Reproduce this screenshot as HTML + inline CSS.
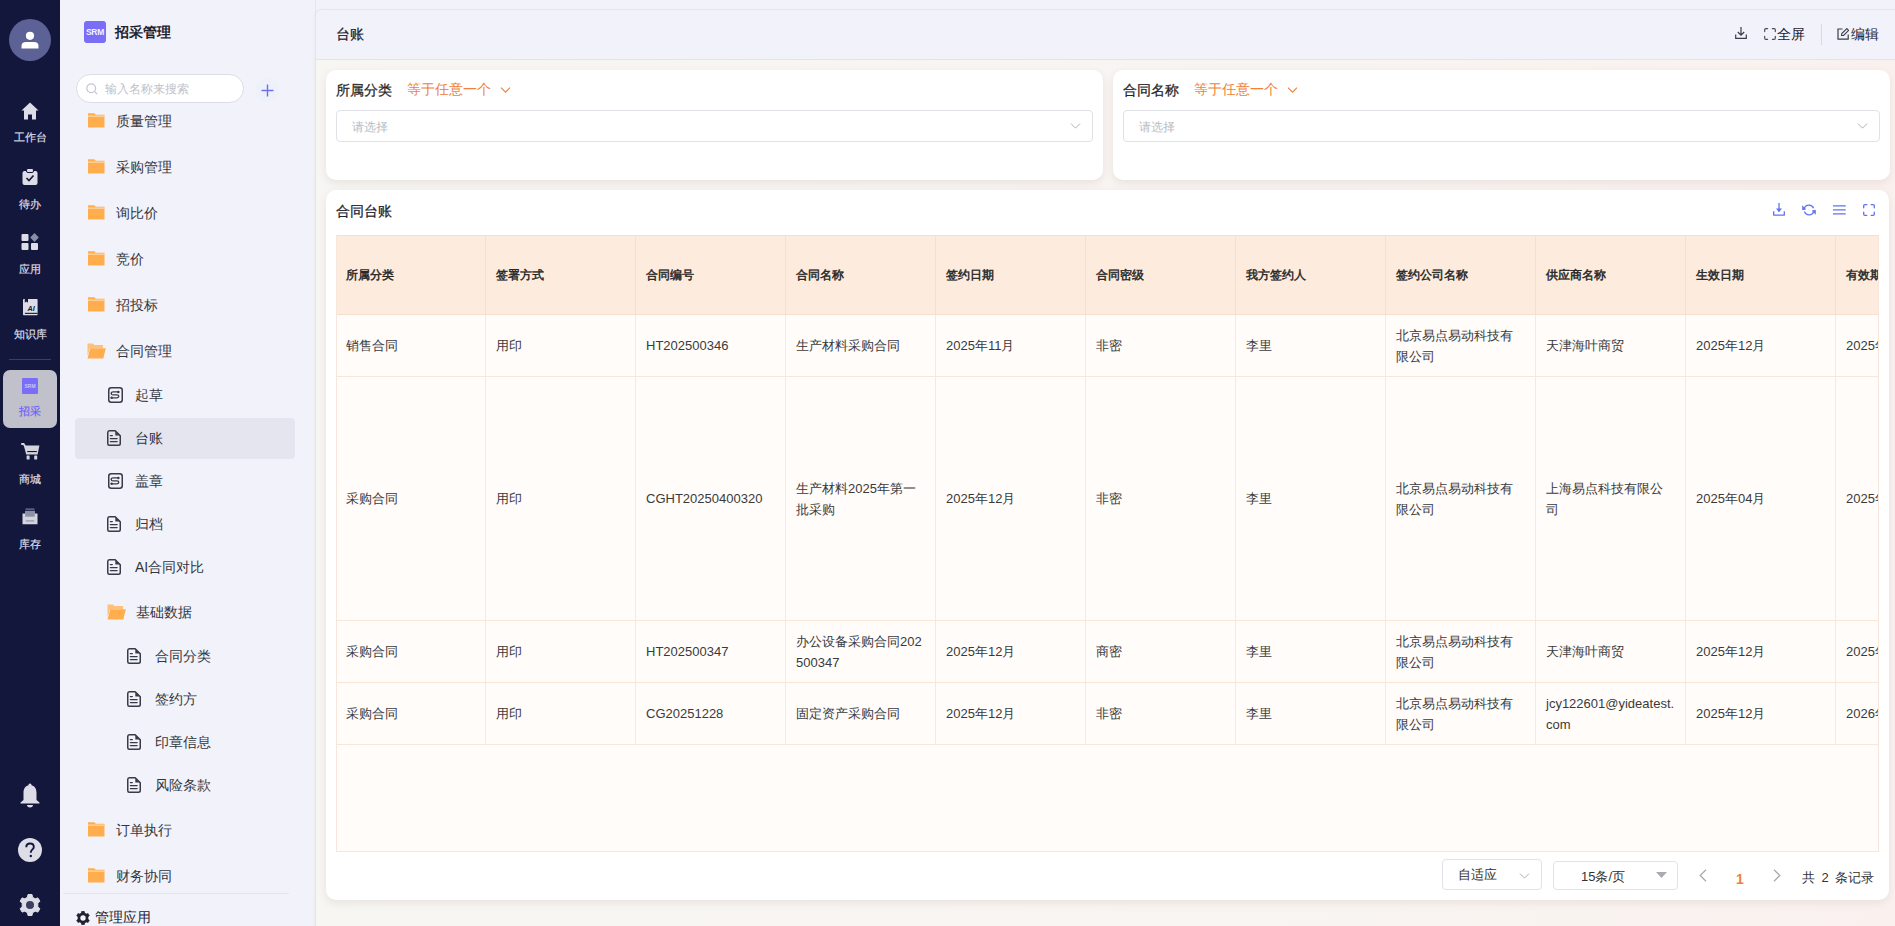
<!DOCTYPE html>
<html><head><meta charset="utf-8">
<style>
*{box-sizing:border-box;margin:0;padding:0}
html,body{width:1895px;height:926px;overflow:hidden}
body{font-family:"Liberation Sans",sans-serif;background:#f2f3fa;position:relative;color:#262626}
.abs{position:absolute}
#nav{left:0;top:0;width:60px;height:926px;background:#13173c}
.nv{position:absolute;left:0;width:60px;text-align:center;color:#dcdde6;font-size:11px;line-height:14px;-webkit-text-stroke:0.2px currentColor}
#side{left:60px;top:0;width:256px;height:926px;background:#f2f3fa;border-right:1px solid #e6e6ee}
.it{position:absolute;font-size:14px;line-height:20px;color:#333640;white-space:nowrap}
.fold{position:absolute}
.doc{position:absolute}
#main{left:316px;top:10px;width:1600px;height:940px;background:linear-gradient(to right,#f7f6f3,#f9f4f1 70%,#faf1ef 100%);border-radius:6px 0 0 0;box-shadow:0 0 0 1px #e4e4ec,-2px 0 3px rgba(0,0,0,.03)}
#hdr{left:0;top:0;width:100%;height:50px;background:#f2f3fa;border-bottom:1px solid #e3e3ea;border-radius:6px 0 0 0}
.card{position:absolute;background:#fff;border-radius:10px;box-shadow:0 3px 8px rgba(120,95,85,.12)}
.lbl{position:absolute;font-size:14px;color:#262626;line-height:20px;white-space:nowrap}
.op{position:absolute;font-size:14px;color:#f0813a;line-height:20px;white-space:nowrap}
.inp{position:absolute;height:32px;border:1px solid #e1e2e8;border-radius:4px;background:#fff}
.ph{position:absolute;font-size:12px;color:#b8bcc4;line-height:16px;white-space:nowrap}
table{border-collapse:collapse;table-layout:fixed;position:absolute}
td,th{border:1px solid #f6e6d8;padding:0 8px 0 10px;vertical-align:middle;text-align:left;white-space:nowrap;overflow:hidden}
th{border-color:#f3e0cf;background:#fdecdd;font-size:12px;font-weight:normal;-webkit-text-stroke:0.45px #262626;color:#262626;height:79px}
td{border-color:#f8e6d9 #f3ebe0;background:#fffcfa;font-size:13px;color:#3a3a3a;line-height:21px}
tr>:first-child{padding-left:9px}
</style></head>
<body>
<div id="nav" class="abs">
  <div class="abs" style="left:9px;top:19px;width:42px;height:42px;border-radius:50%;background:#5c6296"></div>
  <svg class="abs" style="left:21px;top:31px" width="18" height="18" viewBox="0 0 18 18"><circle cx="9" cy="4.8" r="4.1" fill="#fff"/><path d="M0.5 17.5 V15 Q0.5 11 5 11 H13 Q17.5 11 17.5 15 V17.5 Z" fill="#fff"/></svg>
  <svg class="abs" style="left:21px;top:102px" width="18" height="18" viewBox="0 0 18 18"><path d="M9 0.5 L17.5 8.5 L15 8.5 L15 17.5 L11 17.5 L11 12.5 L7 12.5 L7 17.5 L3 17.5 L3 8.5 L0.5 8.5 Z" fill="#dcdde6"/></svg>
  <div class="nv" style="top:130px">工作台</div>
  <svg class="abs" style="left:22px;top:168px" width="16" height="17" viewBox="0 0 16 17"><rect x="0.5" y="3" width="15" height="14" rx="2" fill="#dcdde6"/><rect x="4.5" y="0.5" width="7" height="4" rx="1.5" fill="#dcdde6" stroke="#13173c" stroke-width="1"/><path d="M4.5 10 L7 12.5 L11.5 7.5" stroke="#13173c" stroke-width="1.6" fill="none"/></svg>
  <div class="nv" style="top:197px">待办</div>
  <svg class="abs" style="left:21px;top:233px" width="18" height="18" viewBox="0 0 18 18"><rect x="0.5" y="1" width="7" height="7" rx="1" fill="#dcdde6"/><rect x="0.5" y="10" width="7" height="7" rx="1" fill="#dcdde6"/><rect x="10" y="10" width="7" height="7" rx="1" fill="#dcdde6"/><path d="M13.5 0 L17.8 4.5 L13.5 9 L9.2 4.5 Z" fill="#8a8da8"/></svg>
  <div class="nv" style="top:262px">应用</div>
  <svg class="abs" style="left:23px;top:299px" width="15" height="17" viewBox="0 0 15 17"><rect x="0" y="0" width="14.6" height="16.3" rx="0.8" fill="#dcdde6"/><path d="M1.8 0 H5 V3.8 L3.4 2.5 L1.8 3.8 Z" fill="#13173c"/><text x="8.2" y="11.8" font-size="7.2" font-weight="bold" font-style="italic" text-anchor="middle" fill="#13173c" font-family="Liberation Sans">AI</text><rect x="1.9" y="13.8" width="12.7" height="1.1" fill="#13173c"/></svg>
  <div class="nv" style="top:327px">知识库</div>
  <div class="abs" style="left:9px;top:359px;width:42px;height:1px;background:#3b3f60"></div>
  <div class="abs" style="left:3px;top:370px;width:54px;height:58px;border-radius:7px;background:#c0c1ca"></div>
  <div class="abs" style="left:22px;top:378px;width:16px;height:16px;background:#7b6ef6;border-radius:1px;color:#c9c4fb;font-size:5px;line-height:16px;text-align:center;font-weight:bold">SRM</div>
  <div class="nv" style="top:404px;color:#6d61f4">招采</div>
  <svg class="abs" style="left:21px;top:443px" width="19" height="17" viewBox="0 0 19 17"><path d="M0.2 1 H2.6 L4.2 3.5" fill="none" stroke="#d4d5de" stroke-width="1.8"/><path d="M2.8 2.4 H18.4 L16.6 11.6 H5.2 Z" fill="#d4d5de"/><rect x="6.2" y="8" width="9.6" height="1.1" fill="#13173c"/><rect x="5.6" y="12.4" width="3" height="4.2" rx="0.6" fill="#d4d5de"/><rect x="13.2" y="12.4" width="3" height="4.2" rx="0.6" fill="#d4d5de"/></svg>
  <div class="nv" style="top:472px">商城</div>
  <svg class="abs" style="left:22px;top:508px" width="16" height="17" viewBox="0 0 16 17"><rect x="3.5" y="0.6" width="9" height="1" fill="#8e90a8"/><path d="M3 2.8 H13 V8 H3 Z" fill="#8e90a8"/><path d="M0.5 5.5 H3.2 V8.2 H12.8 V5.5 H15.5 V16.3 H0.5 Z" fill="#d4d5de"/><rect x="3.8" y="12.4" width="8.4" height="1.1" fill="#8e90a8"/></svg>
  <div class="nv" style="top:537px">库存</div>
  <svg class="abs" style="left:20px;top:783px" width="20" height="25" viewBox="0 0 20 25"><path d="M10 0.5 C11.2 0.5 11.5 1.5 11.5 2.2 C15 3 16.5 6 16.5 10 V17 L19.5 19.5 V20.5 H0.5 V19.5 L3.5 17 V10 C3.5 6 5 3 8.5 2.2 C8.5 1.5 8.8 0.5 10 0.5 Z" fill="#dcdde6"/><path d="M7 22 H13 C13 23.5 11.8 24.5 10 24.5 C8.2 24.5 7 23.5 7 22 Z" fill="#dcdde6"/></svg>
  <svg class="abs" style="left:18px;top:838px" width="24" height="24" viewBox="0 0 24 24"><circle cx="12" cy="12" r="12" fill="#dcdde6"/><path d="M8.3 9.2 C8.3 6.8 10 5.5 12 5.5 C14.2 5.5 15.8 6.9 15.8 8.9 C15.8 11.5 12.8 11.8 12.8 14.2 V14.8" fill="none" stroke="#13173c" stroke-width="1.9"/><circle cx="12.8" cy="18" r="1.2" fill="#13173c"/></svg>
  <svg class="abs" style="left:19px;top:894px" width="22" height="22" viewBox="0 0 22 22"><path d="M9 0.5 H13 L13.6 3.3 L16.2 4.8 L18.9 3.9 L20.9 7.3 L18.8 9.2 V12.8 L20.9 14.7 L18.9 18.1 L16.2 17.2 L13.6 18.7 L13 21.5 H9 L8.4 18.7 L5.8 17.2 L3.1 18.1 L1.1 14.7 L3.2 12.8 V9.2 L1.1 7.3 L3.1 3.9 L5.8 4.8 L8.4 3.3 Z" fill="#dcdde6" stroke="#dcdde6" stroke-width="1" stroke-linejoin="round"/><circle cx="11" cy="11" r="4" fill="#3b3f60"/></svg>
</div>
<div id="side" class="abs">
  <div class="abs" style="left:24px;top:21px;width:22px;height:22px;background:#7b6ef6;border-radius:3px;color:#f4f2ff;font-size:8.5px;font-weight:bold;line-height:22px;text-align:center;letter-spacing:-0.3px">SRM</div>
  <div class="it" style="left:55px;top:22px;font-weight:bold;color:#1f2230">招采管理</div>
  <div class="abs" style="left:16px;top:74px;width:168px;height:29px;border:1px solid #dcdde6;border-radius:15px;background:#fff"></div>
  <svg class="abs" style="left:26px;top:83px" width="12" height="12" viewBox="0 0 12 12"><circle cx="5.2" cy="5.2" r="4.4" fill="none" stroke="#c4c6ce" stroke-width="1.2"/><path d="M8.4 8.4 L11.2 11.2" stroke="#c4c6ce" stroke-width="1.2"/></svg>
  <div class="abs" style="left:45px;top:81px;font-size:12px;line-height:16px;color:#c0c2ca;white-space:nowrap">输入名称来搜索</div>
  <div class="abs" style="left:195px;top:78px;width:24px;height:24px;border-radius:50%;background:#eef0fa"></div>
  <svg class="abs" style="left:201px;top:84px" width="13" height="13" viewBox="0 0 13 13"><path d="M6.5 0.5 V12.5 M0.5 6.5 H12.5" stroke="#6b6ff0" stroke-width="1.4"/></svg>
<svg class="fold" style="left:28px;top:113px" width="17" height="15" viewBox="0 0 17 15"><path d="M0 0.2 H6.3 L7.8 1.8 H16.5 V14.6 H0 Z" fill="#ffad4d"/><rect x="0" y="2.6" width="16.5" height="1" fill="#ffe2c2"/></svg><div class="it" style="left:56px;top:111px">质量管理</div>
<svg class="fold" style="left:28px;top:159px" width="17" height="15" viewBox="0 0 17 15"><path d="M0 0.2 H6.3 L7.8 1.8 H16.5 V14.6 H0 Z" fill="#ffad4d"/><rect x="0" y="2.6" width="16.5" height="1" fill="#ffe2c2"/></svg><div class="it" style="left:56px;top:157px">采购管理</div>
<svg class="fold" style="left:28px;top:205px" width="17" height="15" viewBox="0 0 17 15"><path d="M0 0.2 H6.3 L7.8 1.8 H16.5 V14.6 H0 Z" fill="#ffad4d"/><rect x="0" y="2.6" width="16.5" height="1" fill="#ffe2c2"/></svg><div class="it" style="left:56px;top:203px">询比价</div>
<svg class="fold" style="left:28px;top:251px" width="17" height="15" viewBox="0 0 17 15"><path d="M0 0.2 H6.3 L7.8 1.8 H16.5 V14.6 H0 Z" fill="#ffad4d"/><rect x="0" y="2.6" width="16.5" height="1" fill="#ffe2c2"/></svg><div class="it" style="left:56px;top:249px">竞价</div>
<svg class="fold" style="left:28px;top:297px" width="17" height="15" viewBox="0 0 17 15"><path d="M0 0.2 H6.3 L7.8 1.8 H16.5 V14.6 H0 Z" fill="#ffad4d"/><rect x="0" y="2.6" width="16.5" height="1" fill="#ffe2c2"/></svg><div class="it" style="left:56px;top:295px">招投标</div>
<svg class="fold" style="left:27px;top:343px" width="19" height="16" viewBox="0 0 19 16"><path d="M0.5 0.5 H6 L7.5 2 H16 V5 H3 L0.5 13 Z" fill="#ffc07a"/><path d="M3.2 5.2 H18.8 L16.3 15.5 H0.5 Z" fill="#ffad4d"/></svg><div class="it" style="left:56px;top:341px">合同管理</div>
<div class="abs" style="left:15px;top:418px;width:220px;height:41px;border-radius:4px;background:#e4e5ee"></div>
<svg class="doc" style="left:48px;top:387px" width="15" height="16" viewBox="0 0 15 16"><rect x="0.75" y="0.75" width="13.5" height="14.5" rx="2.5" fill="none" stroke="#373a47" stroke-width="1.5"/><path d="M10.4 4.9 H5.1 Q3.2 4.9 3.2 6.4 Q3.2 7.9 5.1 7.9 H9 Q10.8 7.9 10.8 9.35 Q10.8 10.8 9 10.8 H3.6" fill="none" stroke="#373a47" stroke-width="1.3"/><circle cx="10.4" cy="4.9" r="1.25" fill="#373a47"/><circle cx="3.6" cy="10.8" r="1.25" fill="#373a47"/></svg><div class="it" style="left:75px;top:385px">起草</div>
<svg class="doc" style="left:47px;top:430px" width="14" height="16" viewBox="0 0 14 16"><path d="M2.3 0.75 H8.2 L13.25 5.8 V13.5 Q13.25 15.25 11.5 15.25 H2.3 Q0.75 15.25 0.75 13.5 V2.5 Q0.75 0.75 2.3 0.75 Z" fill="none" stroke="#373a47" stroke-width="1.5" stroke-linejoin="round"/><path d="M8.3 1 L8.3 5.5 L13 5.5 Z" fill="#373a47"/><path d="M3.4 5.6 H5.3 M3.4 8.6 H10.1 M3.4 11.6 H10.1" stroke="#373a47" stroke-width="1.4" stroke-linecap="round"/></svg><div class="it" style="left:75px;top:428px">台账</div>
<svg class="doc" style="left:48px;top:473px" width="15" height="16" viewBox="0 0 15 16"><rect x="0.75" y="0.75" width="13.5" height="14.5" rx="2.5" fill="none" stroke="#373a47" stroke-width="1.5"/><path d="M10.4 4.9 H5.1 Q3.2 4.9 3.2 6.4 Q3.2 7.9 5.1 7.9 H9 Q10.8 7.9 10.8 9.35 Q10.8 10.8 9 10.8 H3.6" fill="none" stroke="#373a47" stroke-width="1.3"/><circle cx="10.4" cy="4.9" r="1.25" fill="#373a47"/><circle cx="3.6" cy="10.8" r="1.25" fill="#373a47"/></svg><div class="it" style="left:75px;top:471px">盖章</div>
<svg class="doc" style="left:47px;top:516px" width="14" height="16" viewBox="0 0 14 16"><path d="M2.3 0.75 H8.2 L13.25 5.8 V13.5 Q13.25 15.25 11.5 15.25 H2.3 Q0.75 15.25 0.75 13.5 V2.5 Q0.75 0.75 2.3 0.75 Z" fill="none" stroke="#373a47" stroke-width="1.5" stroke-linejoin="round"/><path d="M8.3 1 L8.3 5.5 L13 5.5 Z" fill="#373a47"/><path d="M3.4 5.6 H5.3 M3.4 8.6 H10.1 M3.4 11.6 H10.1" stroke="#373a47" stroke-width="1.4" stroke-linecap="round"/></svg><div class="it" style="left:75px;top:514px">归档</div>
<svg class="doc" style="left:47px;top:559px" width="14" height="16" viewBox="0 0 14 16"><path d="M2.3 0.75 H8.2 L13.25 5.8 V13.5 Q13.25 15.25 11.5 15.25 H2.3 Q0.75 15.25 0.75 13.5 V2.5 Q0.75 0.75 2.3 0.75 Z" fill="none" stroke="#373a47" stroke-width="1.5" stroke-linejoin="round"/><path d="M8.3 1 L8.3 5.5 L13 5.5 Z" fill="#373a47"/><path d="M3.4 5.6 H5.3 M3.4 8.6 H10.1 M3.4 11.6 H10.1" stroke="#373a47" stroke-width="1.4" stroke-linecap="round"/></svg><div class="it" style="left:75px;top:557px">AI合同对比</div>
<svg class="fold" style="left:47px;top:604px" width="19" height="16" viewBox="0 0 19 16"><path d="M0.5 0.5 H6 L7.5 2 H16 V5 H3 L0.5 13 Z" fill="#ffc07a"/><path d="M3.2 5.2 H18.8 L16.3 15.5 H0.5 Z" fill="#ffad4d"/></svg><div class="it" style="left:76px;top:602px">基础数据</div>
<svg class="doc" style="left:67px;top:648px" width="14" height="16" viewBox="0 0 14 16"><path d="M2.3 0.75 H8.2 L13.25 5.8 V13.5 Q13.25 15.25 11.5 15.25 H2.3 Q0.75 15.25 0.75 13.5 V2.5 Q0.75 0.75 2.3 0.75 Z" fill="none" stroke="#373a47" stroke-width="1.5" stroke-linejoin="round"/><path d="M8.3 1 L8.3 5.5 L13 5.5 Z" fill="#373a47"/><path d="M3.4 5.6 H5.3 M3.4 8.6 H10.1 M3.4 11.6 H10.1" stroke="#373a47" stroke-width="1.4" stroke-linecap="round"/></svg><div class="it" style="left:95px;top:646px">合同分类</div>
<svg class="doc" style="left:67px;top:691px" width="14" height="16" viewBox="0 0 14 16"><path d="M2.3 0.75 H8.2 L13.25 5.8 V13.5 Q13.25 15.25 11.5 15.25 H2.3 Q0.75 15.25 0.75 13.5 V2.5 Q0.75 0.75 2.3 0.75 Z" fill="none" stroke="#373a47" stroke-width="1.5" stroke-linejoin="round"/><path d="M8.3 1 L8.3 5.5 L13 5.5 Z" fill="#373a47"/><path d="M3.4 5.6 H5.3 M3.4 8.6 H10.1 M3.4 11.6 H10.1" stroke="#373a47" stroke-width="1.4" stroke-linecap="round"/></svg><div class="it" style="left:95px;top:689px">签约方</div>
<svg class="doc" style="left:67px;top:734px" width="14" height="16" viewBox="0 0 14 16"><path d="M2.3 0.75 H8.2 L13.25 5.8 V13.5 Q13.25 15.25 11.5 15.25 H2.3 Q0.75 15.25 0.75 13.5 V2.5 Q0.75 0.75 2.3 0.75 Z" fill="none" stroke="#373a47" stroke-width="1.5" stroke-linejoin="round"/><path d="M8.3 1 L8.3 5.5 L13 5.5 Z" fill="#373a47"/><path d="M3.4 5.6 H5.3 M3.4 8.6 H10.1 M3.4 11.6 H10.1" stroke="#373a47" stroke-width="1.4" stroke-linecap="round"/></svg><div class="it" style="left:95px;top:732px">印章信息</div>
<svg class="doc" style="left:67px;top:777px" width="14" height="16" viewBox="0 0 14 16"><path d="M2.3 0.75 H8.2 L13.25 5.8 V13.5 Q13.25 15.25 11.5 15.25 H2.3 Q0.75 15.25 0.75 13.5 V2.5 Q0.75 0.75 2.3 0.75 Z" fill="none" stroke="#373a47" stroke-width="1.5" stroke-linejoin="round"/><path d="M8.3 1 L8.3 5.5 L13 5.5 Z" fill="#373a47"/><path d="M3.4 5.6 H5.3 M3.4 8.6 H10.1 M3.4 11.6 H10.1" stroke="#373a47" stroke-width="1.4" stroke-linecap="round"/></svg><div class="it" style="left:95px;top:775px">风险条款</div>
<svg class="fold" style="left:28px;top:822px" width="17" height="15" viewBox="0 0 17 15"><path d="M0 0.2 H6.3 L7.8 1.8 H16.5 V14.6 H0 Z" fill="#ffad4d"/><rect x="0" y="2.6" width="16.5" height="1" fill="#ffe2c2"/></svg><div class="it" style="left:56px;top:820px">订单执行</div>
<svg class="fold" style="left:28px;top:868px" width="17" height="15" viewBox="0 0 17 15"><path d="M0 0.2 H6.3 L7.8 1.8 H16.5 V14.6 H0 Z" fill="#ffad4d"/><rect x="0" y="2.6" width="16.5" height="1" fill="#ffe2c2"/></svg><div class="it" style="left:56px;top:866px">财务协同</div>
<div class="abs" style="left:3px;top:893px;width:226px;height:1px;background:#e3e4ec"></div>
<svg class="abs" style="left:16px;top:911px" width="14" height="14" viewBox="0 0 22 22"><path d="M9 0.5 H13 L13.6 3.3 L16.2 4.8 L18.9 3.9 L20.9 7.3 L18.8 9.2 V12.8 L20.9 14.7 L18.9 18.1 L16.2 17.2 L13.6 18.7 L13 21.5 H9 L8.4 18.7 L5.8 17.2 L3.1 18.1 L1.1 14.7 L3.2 12.8 V9.2 L1.1 7.3 L3.1 3.9 L5.8 4.8 L8.4 3.3 Z" fill="#1f2230" stroke="#1f2230" stroke-linejoin="round"/><circle cx="11" cy="11" r="4.2" fill="#f1f2f9"/></svg>
<div class="it" style="left:35px;top:907px;color:#1f2230">管理应用</div>
</div>
<div id="main" class="abs">

  <div id="hdr" class="abs"></div>
  <div class="abs" style="left:20px;top:14px;font-size:14px;line-height:20px;-webkit-text-stroke:0.25px #1f2230;color:#1f2230">台账</div>
  <svg class="abs" style="left:1419px;top:17px" width="12" height="12" viewBox="0 0 12 12"><path d="M6 0 V8 M2.8 5 L6 8.2 L9.2 5 M0.7 7.5 V11.3 H11.3 V7.5" fill="none" stroke="#3a3d4a" stroke-width="1.2"/></svg>
  <svg class="abs" style="left:1448px;top:18px" width="12" height="12" viewBox="0 0 12 12"><path d="M3.6 0.7 H1.8 Q0.7 0.7 0.7 1.8 V3.6 M8.4 0.7 H10.2 Q11.3 0.7 11.3 1.8 V3.6 M0.7 8.4 V10.2 Q0.7 11.3 1.8 11.3 H3.6 M11.3 8.4 V10.2 Q11.3 11.3 10.2 11.3 H8.4" fill="none" stroke="#4a4d5a" stroke-width="1.2" stroke-linecap="round"/></svg>
  <div class="abs" style="left:1461px;top:14px;font-size:14px;line-height:20px;color:#1f2230">全屏</div>
  <div class="abs" style="left:1505px;top:14px;width:1px;height:21px;background:#d8d9e2"></div>
  <svg class="abs" style="left:1521px;top:18px" width="12" height="12" viewBox="0 0 12 12"><path d="M5.5 1 H1 V11.2 H11.2 V6.5" fill="none" stroke="#3a3d4a" stroke-width="1.2"/><path d="M4.5 7.5 L4.8 5.6 L9.8 0.6 L11.6 2.4 L6.6 7.4 Z" fill="none" stroke="#3a3d4a" stroke-width="1.1"/></svg>
  <div class="abs" style="left:1535px;top:14px;font-size:14px;line-height:20px;color:#1f2230">编辑</div>
<div class="card" style="left:10px;top:60px;width:777px;height:110px"></div>
<div class="lbl" style="left:20px;top:70px;-webkit-text-stroke:0.25px #262626">所属分类</div>
<div class="op" style="left:91px;top:69px">等于任意一个</div>
<svg class="abs" style="left:184px;top:77px" width="11" height="6" viewBox="0 0 12 7"><path d="M0.7 0.7 L6 6 L11.3 0.7" fill="none" stroke="#f0813a" stroke-width="1.3"/></svg><div class="inp" style="left:20px;top:100px;width:757px"></div>
<div class="ph" style="left:36px;top:109px">请选择</div>
<svg class="abs" style="left:754px;top:113px" width="11" height="6" viewBox="0 0 12 7"><path d="M0.7 0.7 L6 6 L11.3 0.7" fill="none" stroke="#a8abb2" stroke-width="1.1"/></svg><div class="card" style="left:797px;top:60px;width:777px;height:110px"></div>
<div class="lbl" style="left:807px;top:70px;-webkit-text-stroke:0.25px #262626">合同名称</div>
<div class="op" style="left:878px;top:69px">等于任意一个</div>
<svg class="abs" style="left:971px;top:77px" width="11" height="6" viewBox="0 0 12 7"><path d="M0.7 0.7 L6 6 L11.3 0.7" fill="none" stroke="#f0813a" stroke-width="1.3"/></svg><div class="inp" style="left:807px;top:100px;width:757px"></div>
<div class="ph" style="left:823px;top:109px">请选择</div>
<svg class="abs" style="left:1541px;top:113px" width="11" height="6" viewBox="0 0 12 7"><path d="M0.7 0.7 L6 6 L11.3 0.7" fill="none" stroke="#a8abb2" stroke-width="1.1"/></svg><div class="card" style="left:10px;top:180px;width:1563px;height:710px"></div>
<div class="abs" style="left:20px;top:191px;font-size:14px;line-height:20px;-webkit-text-stroke:0.25px #1f2230;color:#1f2230">合同台账</div>
<svg class="abs" style="left:1457px;top:193px" width="12" height="13" viewBox="0 0 12 13"><path d="M6 0 V8.5" stroke="#6272f2" stroke-width="1.3"/><path d="M3 5.6 L6 9.2 L9 5.6 Z" fill="#6272f2"/><path d="M0.7 8.3 V12.2 H11.3 V8.3" fill="none" stroke="#6272f2" stroke-width="1.3" stroke-linejoin="round"/></svg>
<svg class="abs" style="left:1486px;top:194px" width="14" height="12" viewBox="0 0 14 12"><path d="M2.2 4.5 A5 5 0 0 1 11.6 4.2 M11.8 7.5 A5 5 0 0 1 2.4 7.6" fill="none" stroke="#6272f2" stroke-width="1.3"/><path d="M0.3 1.8 L3.8 5.2 L0.6 5.9 Z M13.7 10.2 L10.2 6.8 L13.4 6.1 Z" fill="#6272f2" stroke="#6272f2" stroke-width="0.6" stroke-linejoin="round"/></svg>
<svg class="abs" style="left:1517px;top:195px" width="13" height="10" viewBox="0 0 13 10"><path d="M0.3 0.8 H12.3 M0.3 4.8 H12.3 M0.3 8.8 H12.3" stroke="#6272f2" stroke-width="1.3" stroke-linecap="round"/></svg>
<svg class="abs" style="left:1547px;top:194px" width="12" height="12" viewBox="0 0 12 12"><path d="M3.8 0.7 H1.8 Q0.7 0.7 0.7 1.8 V3.8 M8.2 0.7 H10.2 Q11.3 0.7 11.3 1.8 V3.8 M0.7 8.2 V10.2 Q0.7 11.3 1.8 11.3 H3.8 M11.3 8.2 V10.2 Q11.3 11.3 10.2 11.3 H8.2" fill="none" stroke="#6272f2" stroke-width="1.3" stroke-linecap="round"/></svg>
<div class="abs" style="left:20px;top:225px;width:1543px;height:617px;overflow:hidden;background:#fffcfa;border:1px solid #f7e6dc;border-top:none">
<table style="left:-1px;top:0;width:1650px"><colgroup><col style="width:149px"><col style="width:150px"><col style="width:150px"><col style="width:150px"><col style="width:150px"><col style="width:150px"><col style="width:150px"><col style="width:150px"><col style="width:150px"><col style="width:150px"><col style="width:150px"></colgroup><tr><th>所属分类</th><th>签署方式</th><th>合同编号</th><th>合同名称</th><th>签约日期</th><th>合同密级</th><th>我方签约人</th><th>签约公司名称</th><th>供应商名称</th><th>生效日期</th><th>有效期限</th></tr>
<tr style="height:62px"><td>销售合同</td><td>用印</td><td>HT202500346</td><td>生产材料采购合同</td><td>2025年11月</td><td>非密</td><td>李里</td><td>北京易点易动科技有<br>限公司</td><td>天津海叶商贸</td><td>2025年12月</td><td>2025年12月</td></tr>
<tr style="height:244px"><td>采购合同</td><td>用印</td><td>CGHT20250400320</td><td>生产材料2025年第一<br>批采购</td><td>2025年12月</td><td>非密</td><td>李里</td><td>北京易点易动科技有<br>限公司</td><td>上海易点科技有限公<br>司</td><td>2025年04月</td><td>2025年12月</td></tr>
<tr style="height:62px"><td>采购合同</td><td>用印</td><td>HT202500347</td><td>办公设备采购合同202<br>500347</td><td>2025年12月</td><td>商密</td><td>李里</td><td>北京易点易动科技有<br>限公司</td><td>天津海叶商贸</td><td>2025年12月</td><td>2025年12月</td></tr>
<tr style="height:62px"><td>采购合同</td><td>用印</td><td>CG20251228</td><td>固定资产采购合同</td><td>2025年12月</td><td>非密</td><td>李里</td><td>北京易点易动科技有<br>限公司</td><td>jcy122601@yideatest.<br>com</td><td>2025年12月</td><td>2026年12月</td></tr>
</table></div>
<div class="abs" style="left:1126px;top:849px;width:100px;height:31px;border:1px solid #e2e3e8;border-radius:4px;background:#fff"></div>
<div class="abs" style="left:1142px;top:856px;font-size:13px;line-height:18px;color:#333">自适应</div>
<svg class="abs" style="left:1203px;top:863px" width="11" height="6" viewBox="0 0 12 7"><path d="M0.7 0.7 L6 6 L11.3 0.7" fill="none" stroke="#a8abb2" stroke-width="1.1"/></svg><div class="abs" style="left:1237px;top:851px;width:125px;height:29px;border:1px solid #e2e3e8;border-radius:4px;background:#fff"></div>
<div class="abs" style="left:1265px;top:858px;font-size:13px;line-height:18px;color:#333">15条/页</div>
<svg class="abs" style="left:1340px;top:862px" width="11" height="6" viewBox="0 0 11 6"><path d="M0 0 H11 L5.5 6 Z" fill="#a8abb2"/></svg>
<svg class="abs" style="left:1383px;top:859px" width="8" height="13" viewBox="0 0 8 13"><path d="M7 0.7 L1.2 6.5 L7 12.3" fill="none" stroke="#a8abb2" stroke-width="1.3"/></svg>
<div class="abs" style="left:1420px;top:859px;font-size:14px;line-height:20px;color:#f0813a;font-weight:bold">1</div>
<svg class="abs" style="left:1457px;top:859px" width="8" height="13" viewBox="0 0 8 13"><path d="M1 0.7 L6.8 6.5 L1 12.3" fill="none" stroke="#a8abb2" stroke-width="1.3"/></svg>
<div class="abs" style="left:1486px;top:859px;font-size:13px;line-height:18px;color:#333;white-space:nowrap;word-spacing:3px">共 2 条记录</div>
</div>
</body></html>
